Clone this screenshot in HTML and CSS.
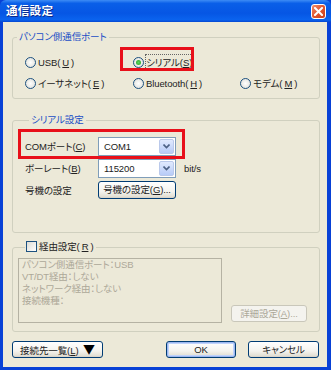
FILE: index.html
```html
<!DOCTYPE html>
<html lang="ja">
<head>
  <meta charset="UTF-8" />
  <title>通信設定</title>
  <link rel="stylesheet" href="styles.css">
</head>
<body>
  <div class="window">
    <div class="titlebar">
      <span class="title">通信設定</span>
      <span class="close">
        <svg width="9" height="9" viewBox="0 0 9 9"><path d="M1 1 L8 8 M8 1 L1 8" stroke="#fff" stroke-width="2" stroke-linecap="square"/></svg>
      </span>
    </div>
    <div class="client">
      <div class="group group-port">
        <div class="group-title">パソコン側通信ポート</div>
        <div class="radio-grid">
          <label class="radio"><span class="dot"></span>USB(<u>U</u>)</label>
          <label class="radio checked marked"><span class="dot"></span><span class="focus">シリアル(<u>S</u>)</span></label>
          <span></span>
          <label class="radio"><span class="dot"></span>イーサネット(<u>E</u>)</label>
          <label class="radio"><span class="dot"></span>Bluetooth(<u>H</u>)</label>
          <label class="radio"><span class="dot"></span>モデム(<u>M</u>)</label>
        </div>
      </div>

      <div class="group group-serial">
        <div class="group-title">シリアル設定</div>
        <div class="serial-rows">
          <div class="form-row marked-row">
            <span class="field-label">COMポート(<u>C</u>)</span>
            <span class="combo"><span class="combo-text">COM1</span><span class="combo-btn"><svg width="7" height="5" viewBox="0 0 7 5"><path d="M0.5 0.5 L3.5 3.5 L6.5 0.5" fill="none" stroke="#4d6185" stroke-width="1.6"/></svg></span></span>
          </div>
          <div class="form-row">
            <span class="field-label">ボーレート(<u>B</u>)</span>
            <span class="combo"><span class="combo-text">115200</span><span class="combo-btn"><svg width="7" height="5" viewBox="0 0 7 5"><path d="M0.5 0.5 L3.5 3.5 L6.5 0.5" fill="none" stroke="#4d6185" stroke-width="1.6"/></svg></span></span>
            <span class="unit">bit/s</span>
          </div>
          <div class="form-row">
            <span class="field-label">号機の設定</span>
            <button class="btn btn-unit">号機の設定(<u>G</u>)...</button>
          </div>
        </div>
      </div>

      <div class="group group-route">
        <div class="group-title check-title"><span class="checkbox"></span>経由設定(<u>R</u>)</div>
        <div class="route-body">
          <div class="route-info">
            <div>パソコン側通信ポート：USB</div>
            <div>VT/DT経由：しない</div>
            <div>ネットワーク経由：しない</div>
            <div>接続機種：</div>
          </div>
          <button class="btn btn-detail" disabled>詳細設定(<u>A</u>)...</button>
        </div>
      </div>

      <div class="actions">
        <button class="btn btn-list">接続先一覧(<u>L</u>) <span class="tri">▼</span></button>
        <span class="spacer"></span>
        <button class="btn btn-ok">OK</button>
        <button class="btn btn-cancel">キャンセル</button>
      </div>
    </div>
  </div>
</body>
</html>
```

FILE: styles.css
```css
body { margin: 0; font-family: "Liberation Sans", "Noto Sans CJK JP", sans-serif; font-size: 9.5px; color: #222; letter-spacing: -0.1px; font-feature-settings: "palt"; }
u { text-decoration: underline; text-underline-offset: 1px; }

.window { width: 331px; height: 370px; box-sizing: border-box; padding: 0 4px 3px 3px; background: #0841d6; display: flex; flex-direction: column; }
.titlebar { height: 22px; margin: 0 -4px 0 -3px; padding: 0 5px 0 6px; display: flex; align-items: center; justify-content: space-between;
  background: linear-gradient(#3d8cf5, #0a5fe8 15%, #0656e4 60%, #0a63ee 90%, #0546d0); border-radius: 6px 6px 0 0; }
.title { color: #fff; font-weight: bold; font-size: 11.5px; line-height: 14px; letter-spacing: 0.3px; text-shadow: 1px 1px #0a2a8c; }
.close { width: 15px; height: 15px; box-sizing: border-box; border: 1px solid #fff; border-radius: 3px; display: flex; align-items: center; justify-content: center;
  background: linear-gradient(135deg, #f08d6c, #e2562f 50%, #c9401c); }

.client { flex: 1; background: #ece9d8; padding: 15px 7px 0 9px; display: flex; flex-direction: column; }

.group { border: 1px solid #d0d0bf; border-radius: 3px; box-sizing: border-box; }
.group-title { display: table; margin: -8px 0 0 4px; padding: 0 2px; background: #ece9d8; color: #1b4fc6; line-height: 13px; }

.group-port { height: 62px; }
.radio-grid { display: grid; grid-template-columns: 108px 107px 1fr; grid-auto-rows: 18px; row-gap: 3px; padding: 10px 0 0 12px; }
.radio { display: flex; align-items: center; gap: 2px; position: relative; justify-self: start; }
.dot { width: 11px; height: 11px; box-sizing: border-box; border: 1px solid #1c5180; border-radius: 50%; background: radial-gradient(#ffffff, #dcdcd5); display: flex; align-items: center; justify-content: center; }
.checked .dot::after { content: ""; width: 5px; height: 5px; border-radius: 50%; background: radial-gradient(#5fd35f, #21a121); }
.focus { outline: 1px dotted #666; outline-offset: 0; }
.marked::after { content: ""; position: absolute; top: -6px; bottom: 0; left: -13px; width: 68px; border: 3px solid #e8101a; }

.group-serial { height: 113px; margin-top: 21px; padding: 0 0 0 12px; }
.serial-rows { margin-top: 10px; display: flex; flex-direction: column; gap: 2px; }
.form-row { display: flex; align-items: center; height: 20px; position: relative; }
.field-label { width: 73px; }
.combo { width: 78px; height: 19px; box-sizing: border-box; border: 1px solid #7f9db9; background: #fff; display: flex; align-items: center; padding: 1px; }
.combo-text { flex: 1; padding-left: 4px; }
.combo-btn { width: 15px; height: 15px; box-sizing: border-box; border: 1px solid #bac9eb; border-radius: 2px; background: linear-gradient(#e1eafe, #b7cbf7); display: flex; align-items: center; justify-content: center; }
.unit { margin-left: 8px; }
.marked-row::after { content: ""; position: absolute; top: -7px; bottom: -3px; left: -7px; width: 161px; border: 3px solid #e8101a; }

.btn { font-family: inherit; font-size: 9.5px; letter-spacing: -0.1px; font-feature-settings: "palt"; color: #222; line-height: 12px; padding: 0; white-space: nowrap; box-sizing: border-box; border: 1px solid #003c74; border-radius: 3px;
  background: linear-gradient(#ffffff, #f4f3ee 60%, #e3e0d5 90%, #d6d0c5); }
.btn-unit { width: 78px; height: 18px; }

.group-route { height: 85px; margin-top: 14px; padding: 0 0 8px 5px; }
.check-title { display: flex; align-items: center; gap: 2px; color: #222; margin-left: 7px; width: max-content; padding: 0 2px 0 1px; }
.checkbox { width: 11px; height: 11px; box-sizing: border-box; border: 1px solid #1c5180; background: linear-gradient(135deg, #dcdcd5, #fff); }
.route-body { display: flex; align-items: flex-end; gap: 9px; margin-top: 5px; }
.route-info { width: 204px; height: 65px; box-sizing: border-box; border: 1px solid #b5b2a3; padding: 0 3px; color: #aca899; line-height: 12px; }
.btn-detail { width: 76px; height: 17px; color: #aca899; border-color: #c9c7ba; background: #f4f3ee; margin-bottom: 1px; }

.actions { display: flex; align-items: center; margin-top: 9px; padding: 0 1px 0 0; gap: 12px; }
.spacer { flex: 1; }
.btn-list { width: 91px; height: 17px; }
.tri { font-family: "Noto Sans CJK JP", sans-serif; font-size: 12px; line-height: 12px; color: #000; margin-left: 2px; }
.btn-ok { width: 70px; height: 17px; box-shadow: inset 0 0 0 1px #9cb7f0, inset 0 0 0 2px #c0d3fb; }
.btn-cancel { width: 71px; height: 17px; }
```
